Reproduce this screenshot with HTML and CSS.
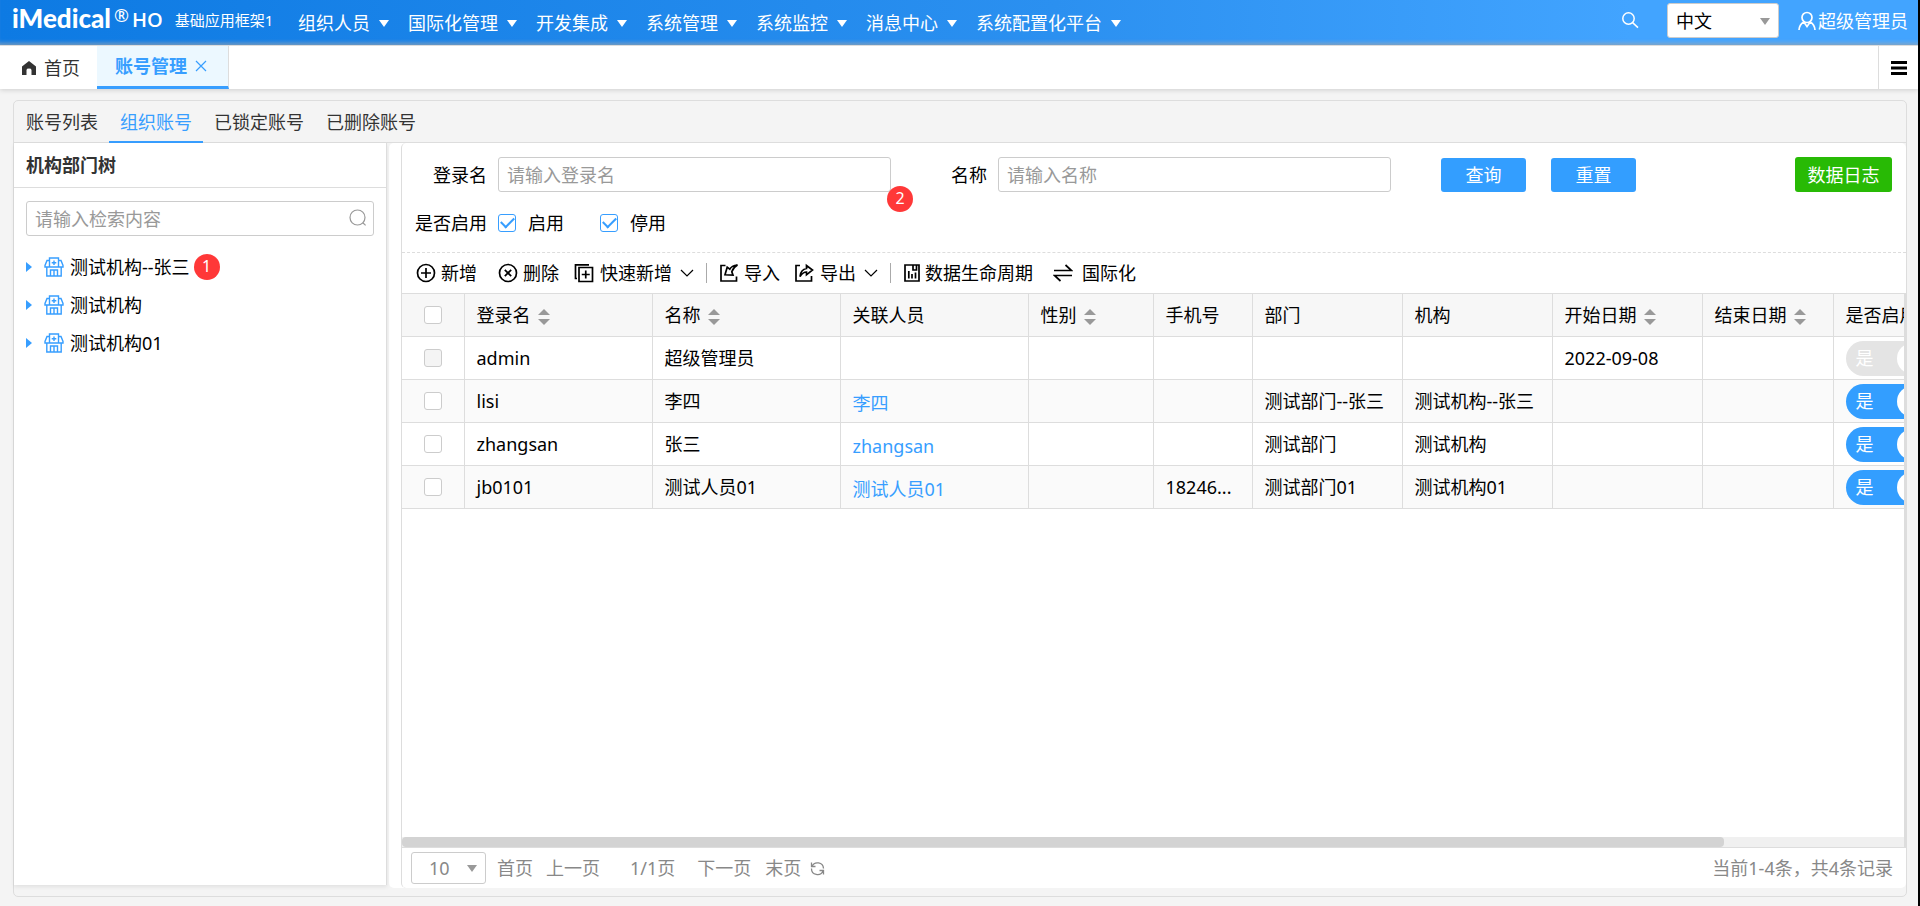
FILE: index.html
```html
<!DOCTYPE html>
<html lang="zh-CN">
<head>
<meta charset="utf-8">
<title>iMedical HO - 账号管理</title>
<link rel="stylesheet" href="styles.css">
</head>
<body>
<div class="app">
  <header class="topbar">
    <div class="brand">
      <span class="brand-name">iMedical</span><span class="brand-reg">®</span><span class="brand-ho">HO</span>
      <span class="brand-sub">基础应用框架1</span>
    </div>
    <nav class="menu">
      <a href="#" class="menu-item">组织人员<i class="caret"></i></a>
      <a href="#" class="menu-item">国际化管理<i class="caret"></i></a>
      <a href="#" class="menu-item">开发集成<i class="caret"></i></a>
      <a href="#" class="menu-item">系统管理<i class="caret"></i></a>
      <a href="#" class="menu-item">系统监控<i class="caret"></i></a>
      <a href="#" class="menu-item">消息中心<i class="caret"></i></a>
      <a href="#" class="menu-item">系统配置化平台<i class="caret"></i></a>
    </nav>
    <div class="top-right">
      <button class="plain search-btn" aria-label="搜索"><svg width="18" height="18" viewBox="0 0 18 18" fill="none" stroke="currentColor" stroke-width="1.5"><circle cx="7.5" cy="7.5" r="5.7"/><path d="M11.6 11.6 17 16.6"/></svg></button>
      <div class="select-wrap lang">
        <select aria-label="语言"><option>中文</option></select><i class="caret grey"></i>
      </div>
      <a href="#" class="user"><svg width="18" height="20" viewBox="0 0 18 20" fill="none" stroke="currentColor" stroke-width="1.7"><circle cx="9" cy="6.5" r="5"/><path d="M1 19c.3-4 2-6.500 4.800-8L9 15.500 12.200 11c2.800 1.500 4.500 4 4.800 8"/></svg>超级管理员</a>
    </div>
  </header>

  <div class="pagetabs">
    <a href="#" class="ptab home"><svg width="14" height="14" viewBox="0 0 14 14" fill="#333"><path d="M7 0 14 5.500V14H9.500V9Q9.500 7.600 7 7.600 4.500 7.600 4.500 9V14H0V5.500z"/></svg>首页</a>
    <div class="ptab active"><a href="#">账号管理</a><button class="plain close" aria-label="关闭"><svg width="12" height="12" viewBox="0 0 12 12" stroke="#379eff" stroke-width="1.200"><path d="M1 1l10 10M11 1 1 11"/></svg></button></div>
    <button class="plain burger" aria-label="菜单"><svg width="16" height="14" viewBox="0 0 16 14" fill="#000"><path d="M0 0h16v3H0zM0 5.500h16v3H0zM0 11h16v3H0z"/></svg></button>
  </div>

  <main class="frame">
    <nav class="subtabs">
      <a href="#" class="subtab">账号列表</a>
      <a href="#" class="subtab active">组织账号</a>
      <a href="#" class="subtab">已锁定账号</a>
      <a href="#" class="subtab">已删除账号</a>
    </nav>
    <div class="content">
      <aside class="side">
        <h2 class="side-title">机构部门树</h2>
        <div class="side-search">
          <input type="text" placeholder="请输入检索内容" aria-label="检索">
          <svg width="18" height="18" viewBox="0 0 18 18" fill="none" stroke="#999" stroke-width="1.200"><circle cx="8.500" cy="8.500" r="7.500"/><path d="M13.800 13.800 16.600 16.400"/></svg>
        </div>
        <ul class="tree">
          <li><i class="arrow"></i><svg class="org" width="20" height="20" viewBox="0 0 20 20"><use href="#org"/></svg>测试机构--张三<span class="badge">1</span></li>
          <li><i class="arrow"></i><svg class="org" width="20" height="20" viewBox="0 0 20 20"><use href="#org"/></svg>测试机构</li>
          <li><i class="arrow"></i><svg class="org" width="20" height="20" viewBox="0 0 20 20"><use href="#org"/></svg>测试机构01</li>
        </ul>
      </aside>

      <section class="panel">
        <form class="filter">
          <div class="filter-row">
            <label class="flabel" for="login">登录名</label>
            <div class="field"><input id="login" class="text" type="text" placeholder="请输入登录名"><span class="badge floating">2</span></div>
            <label class="flabel second" for="name">名称</label>
            <div class="field"><input id="name" class="text" type="text" placeholder="请输入名称"></div>
            <button type="button" class="btn query">查询</button>
            <button type="button" class="btn reset">重置</button>
            <button type="button" class="btn log">数据日志</button>
          </div>
          <div class="filter-row checks">
            <span class="flabel">是否启用</span>
            <label class="check"><input type="checkbox" checked>启用</label>
            <label class="check"><input type="checkbox" checked>停用</label>
          </div>
        </form>

        <div class="toolbar">
          <button class="tool add"><svg width="20" height="20" viewBox="0 0 20 20"><circle cx="10" cy="10" r="8.500"/><path d="M10 5v10M5 10h10"/></svg>新增</button>
          <button class="tool del"><svg width="20" height="20" viewBox="0 0 20 20"><circle cx="10" cy="10" r="8.500"/><path d="M6.800 6.800l6.400 6.400M13.200 6.800l-6.400 6.400"/></svg>删除</button>
          <button class="tool quick"><svg width="20" height="20" viewBox="0 0 20 20"><path d="M5 4.500h13.500v14H5zM11.750 7.500v8M7.750 11.500h8M3 15.500H1.500V1.800H15"/></svg>快速新增<svg class="chev" width="14" height="10" viewBox="0 0 14 10"><path d="M1 2l6 6 6-6"/></svg></button>
          <i class="sep"></i>
          <button class="tool imp"><svg width="20" height="20" viewBox="0 0 20 20"><path d="M6.500 2.500H2V18h15.500v-4.500M18.500 2C14 2.500 12 3.800 10.800 6.200L8.200 4.200 6 11.800 14 12.200 12.800 8.800C13.800 5.800 15.500 3.600 18.500 2z"/></svg>导入</button>
          <button class="tool exp"><svg width="20" height="20" viewBox="0 0 20 20"><path d="M6 2.500H2V18h15.500v-5M6 13.500C6.500 9 9 6 12.500 5.500V2.500L18.500 7l-6 4.800V9C9.800 9 8 10.500 6 13.500z"/></svg>导出<svg class="chev" width="14" height="10" viewBox="0 0 14 10"><path d="M1 2l6 6 6-6"/></svg></button>
          <i class="sep"></i>
          <button class="tool life"><svg width="16" height="20" viewBox="0 0 16 20"><path d="M1 2h14v16H1zM9 2v5h3.500V2M4.800 8v7.500M8 11v4.500M11.500 9.500v6"/></svg>数据生命周期</button>
          <button class="tool intl"><svg width="20" height="20" viewBox="0 0 20 20"><path d="M1 7.500h17.500L12.500 2M19 12.500H1.500L7.500 18"/></svg>国际化</button>
        </div>

        <div class="grid-scroll">
          <table class="grid">
            <colgroup><col class="c-check"><col class="c-name"><col class="c-name"><col class="c-name"><col class="c-sex"><col class="c-phone"><col class="c-org"><col class="c-org"><col class="c-org"><col class="c-end"><col class="c-on"></colgroup>
            <thead>
              <tr>
                <th class="pick"><input type="checkbox" aria-label="全选"></th>
                <th>登录名<i class="sort"></i></th><th>名称<i class="sort"></i></th><th>关联人员</th><th>性别<i class="sort"></i></th><th>手机号</th><th>部门</th><th>机构</th><th>开始日期<i class="sort"></i></th><th>结束日期<i class="sort"></i></th><th>是否启用</th>
              </tr>
            </thead>
            <tbody>
              <tr><td class="pick"><input type="checkbox" disabled aria-label="选择 admin"></td><td>admin</td><td>超级管理员</td><td></td><td></td><td></td><td></td><td></td><td>2022-09-08</td><td></td><td class="onoff"><button class="switch off">是</button></td></tr>
              <tr><td class="pick"><input type="checkbox" aria-label="选择 lisi"></td><td>lisi</td><td>李四</td><td><a href="#">李四</a></td><td></td><td></td><td>测试部门--张三</td><td>测试机构--张三</td><td></td><td></td><td class="onoff"><button class="switch">是</button></td></tr>
              <tr><td class="pick"><input type="checkbox" aria-label="选择 zhangsan"></td><td>zhangsan</td><td>张三</td><td><a href="#">zhangsan</a></td><td></td><td></td><td>测试部门</td><td>测试机构</td><td></td><td></td><td class="onoff"><button class="switch">是</button></td></tr>
              <tr><td class="pick"><input type="checkbox" aria-label="选择 jb0101"></td><td>jb0101</td><td>测试人员01</td><td><a href="#">测试人员01</a></td><td></td><td>18246...</td><td>测试部门01</td><td>测试机构01</td><td></td><td></td><td class="onoff"><button class="switch">是</button></td></tr>
            </tbody>
          </table>
          <div class="hbar"><div class="hthumb"></div></div>
        </div>

        <footer class="pager">
          <div class="select-wrap size"><select aria-label="每页条数"><option>10</option></select><i class="caret grey"></i></div>
          <button class="plain first">首页</button>
          <button class="plain prev">上一页</button>
          <span class="current">1/1页</span>
          <button class="plain next">下一页</button>
          <button class="plain last">末页</button>
          <button class="plain refresh" aria-label="刷新"><svg width="15" height="15" viewBox="0 0 15 15" fill="none" stroke="#888" stroke-width="1.300"><path d="M2 5.500A6 6 0 0 1 13.500 7.500M13 10A6 6 0 0 1 1.500 7.500M1.500 1.500V5.500H5.500M13.500 13.500V9.500H9.500"/></svg></button>
          <span class="total">当前1-4条，共4条记录</span>
        </footer>
      </section>
    </div>
  </main>
</div>

<svg class="defs" width="0" height="0" aria-hidden="true">
  <symbol id="org" viewBox="0 0 20 20">
    <g fill="none" stroke="#379eff" stroke-width="1.400">
      <path d="M5.500 3.500H3L1 8.500V10h18V8.500L17 3.500h-2.500M5.500 10V1h9v9M10 3.500v4.500M7.700 5.700h4.600M2.800 10v9h14.400v-9M6.500 19v-6h7v6M10 13v6"/>
    </g>
  </symbol>
</svg>
</body>
</html>
```
FILE: styles.css
```css
* { box-sizing: border-box; }
html, body { height: 100%; margin: 0; }
body {
  background: #000;
  color: #000;
  font: 18px/24px "Noto Sans", "Noto Sans CJK SC", sans-serif;
}
a { color: inherit; text-decoration: none; }
button, input, select { font: inherit; color: inherit; margin: 0; }
svg { flex: none; }
.defs { display: block; }
.plain { border: 0; padding: 0; background: none; display: flex; align-items: center; }

.app {
  height: 100vh;
  margin-right: 2px;
  background: #f4f4f4;
  display: flex;
  flex-direction: column;
  overflow: hidden;
}

/* top bar */
.topbar {
  flex: none;
  height: 45px;
  display: flex;
  align-items: flex-start;
  color: #fff;
  background: linear-gradient(90deg, #0d7ae3, #2b90f0 55%, #42a4ff 85%);
  box-shadow: inset 0 -5px 4px -3px rgba(170, 180, 190, .7);
}
.brand { display: flex; width: 298px; padding-left: 12px; padding-top: 5px; white-space: nowrap; }
.brand-name { font: 900 26px/26px Lato, sans-serif; }
.brand-reg { font-size: 18px; line-height: 20px; margin-left: 3px; }
.brand-ho { font: 600 20px/29px "Open Sans", sans-serif; margin-left: 3px; }
.brand-sub { font-size: 15px; line-height: 31px; margin-left: 12px; }
.menu { display: flex; gap: 19px; padding-top: 11px; white-space: nowrap; }
.menu-item { display: flex; align-items: center; gap: 9px; }
.caret { width: 0; height: 0; border: 5px solid transparent; border-top: 7px solid #fff; border-bottom: 0; }
.caret.grey { border-top-color: #999; position: absolute; right: 9px; top: 50%; margin-top: -3px; pointer-events: none; }
.top-right { margin-left: auto; display: flex; align-items: flex-start; padding-right: 10px; padding-top: 3px; white-space: nowrap; }
.search-btn { height: 34px; margin-right: 28px; }
.select-wrap { position: relative; }
.select-wrap select {
  appearance: none;
  width: 100%;
  height: 100%;
  border: 1px solid #ccc;
  border-radius: 3px;
  background: #fff;
  padding: 0 8px;
}
.lang { width: 112px; height: 35px; color: #000; margin-right: 19px; }
.user { display: flex; align-items: center; gap: 2px; height: 35px; }

/* page tabs */
.pagetabs {
  flex: none;
  height: 44px;
  display: flex;
  background: #fff;
  border-top: 1px solid #ddd;
  box-shadow: 0 1px 5px rgba(0, 0, 0, .16);
  color: #333;
}
.ptab { display: flex; align-items: center; }
.home { width: 97px; padding-left: 22px; gap: 8px; }
.active.ptab {
  width: 132px;
  padding-left: 18px;
  gap: 8px;
  background: #ecf8ff;
  color: #379eff;
  font-weight: 700;
  border-bottom: 3px solid #379eff;
  border-right: 1px solid #ddd;
}
.burger { margin-left: auto; width: 40px; padding-left: 12px; border-left: 1px solid #ddd; }

/* framed content */
.frame {
  flex: 1;
  min-height: 0;
  margin: 11px 11px 9px 13px;
  border: 1px solid #ddd;
  border-radius: 5px;
  display: flex;
  flex-direction: column;
}
.subtabs { flex: none; height: 42px; display: flex; border-bottom: 1px solid #ddd; color: #333; padding-left: 1px; }
.subtab { height: 43px; padding: 9px 11px 0; }
.subtab.active { color: #379eff; border-bottom: 3px solid #379eff; }
.content { flex: 1; min-height: 0; display: flex; padding-bottom: 8px; }

.side {
  position: relative;
  z-index: 1;
  flex: none;
  width: 373px;
  margin-bottom: 3px;
  background: #fff;
  border-right: 1px solid #ddd;
  box-shadow: 0 2px 4px rgba(0, 0, 0, .08);
}
.side-title { margin: 0; height: 45px; padding: 10px 12px; font-size: 18px; line-height: 24px; color: #333; border-bottom: 1px solid #ddd; }
.side-search { position: relative; margin: 13px 12px 12px; height: 35px; }
.side-search input { width: 100%; height: 100%; padding: 0 8px; border: 1px solid #ccc; border-radius: 3px; }
.side-search svg { position: absolute; right: 7px; top: 8px; }
input::placeholder { color: #999; opacity: 1; }
.tree { list-style: none; margin: 0; padding: 0 12px; }
.tree li { display: flex; align-items: center; height: 38px; }
.arrow { border: 5px solid transparent; border-left: 6px solid #379eff; border-right: 0; }
.org { margin: 0 6px 0 12px; }
.badge {
  width: 26px;
  height: 26px;
  border-radius: 50%;
  background: #ff3838;
  color: #fff;
  font-size: 16px;
  line-height: 24px;
  text-align: center;
}
.tree .badge { margin-left: 4px; }
.badge.floating { position: absolute; right: -22px; bottom: -20px; }

.panel {
  flex: 1;
  min-width: 0;
  display: flex;
  flex-direction: column;
  background: #fff;
  border-left: 1px solid #ddd;
  border-radius: 5px;
  margin-left: 14px;
  box-shadow: -12px 0 0 #fff;
}

/* filter form */
.filter { flex: none; height: 110px; padding: 14px 14px 0 10px; border-bottom: 1px dashed #ddd; }
.filter-row { display: flex; align-items: center; height: 35px; }
.flabel { width: 75px; text-align: right; white-space: nowrap; }
.flabel.second { width: 96px; }
.field { position: relative; flex: 0 1 393px; margin-left: 11px; height: 35px; }
.text { width: 100%; height: 100%; padding: 0 8px; border: 1px solid #ccc; border-radius: 3px; }
.btn { height: 34px; border: 0; border-radius: 3px; color: #fff; background: #339eff; width: 85px; flex: none; padding: 0; }
.query { margin-left: 50px; }
.reset { margin-left: 25px; }
.log { margin-left: auto; width: 97px; height: 35px; background: #28ba05; }
.checks { margin-top: 13px; }
.check { display: flex; align-items: center; gap: 12px; width: 91px; margin-left: 11px; }
input[type="checkbox"] {
  appearance: none;
  width: 18px;
  height: 18px;
  border: 1px solid #ccc;
  border-radius: 3px;
  background: #fff;
  display: grid;
  place-items: center;
}
input[type="checkbox"]:disabled { background: #f4f4f4; }
input[type="checkbox"]:checked { border-color: #379eff; }
input[type="checkbox"]:checked::before {
  content: "";
  width: 11px;
  height: 6px;
  margin-bottom: 3px;
  border: solid #379eff;
  border-width: 0 0 2px 2px;
  transform: rotate(-45deg);
}

/* toolbar */
.toolbar { flex: none; height: 40px; display: flex; align-items: center; padding-left: 14px; }
.tool { border: 0; background: none; padding: 0; display: flex; align-items: center; white-space: nowrap; gap: 5px; }
.tool svg { fill: none; stroke: #000; stroke-width: 1.7; }
.tool .chev { stroke-width: 1.2; margin-left: 2px; }
.del { margin-left: 21px; }
.quick { margin-left: 15px; gap: 6px; }
.imp { margin-left: 12px; }
.exp { margin-left: 14px; gap: 6px; }
.life { margin-left: 13px; }
.intl { margin-left: 20px; gap: 9px; }
.sep { width: 1px; height: 20px; background: #aaa; margin-left: 12px; }

/* table */
.grid-scroll { flex: 1; min-height: 0; overflow: hidden; display: flex; flex-direction: column; border-right: 2px solid #ddd; }
.grid { table-layout: fixed; width: 1531px; border-collapse: collapse; flex: none; }
.c-check { width: 62px; }
.c-name { width: 188px; }
.c-sex { width: 125px; }
.c-phone { width: 99px; }
.c-org { width: 150px; }
.c-end { width: 131px; }
.c-on { width: 100px; }
.grid th, .grid td {
  height: 43px;
  padding: 0 0 0 12px;
  border: 1px solid #ddd;
  border-left: 0;
  font-weight: 400;
  text-align: left;
  white-space: nowrap;
  overflow: hidden;
}
.grid th { background: #f7f7f7; }
.grid tbody tr:nth-child(even) { background: #fafafa; }
.grid .pick { padding: 0 0 0 22px; }
.grid a { display: block; padding-top: 3px; color: #379eff; }
.sort { display: inline-grid; gap: 4px; margin-left: 7px; vertical-align: middle; }
.sort::before, .sort::after { content: ""; border: 6px solid transparent; }
.sort::before { border-top: 0; border-bottom-color: #999; }
.sort::after { border-bottom: 0; border-top-color: #999; }
.switch {
  display: flex;
  align-items: center;
  justify-content: space-between;
  width: 84px;
  height: 35px;
  padding: 0 2px 0 10px;
  border: 0;
  border-radius: 18px;
  background: #339eff;
  color: #fff;
}
.switch::after { content: ""; width: 31px; height: 31px; border-radius: 50%; background: #fff; }
.switch.off { background: #e4e4e4; }
.hbar { flex: none; margin-top: auto; height: 10px; background: #f0f0f0; }
.hthumb { width: 88%; height: 100%; background: #d3d3d3; border-radius: 4px; }

/* pager */
.pager { flex: none; height: 41px; display: flex; align-items: center; padding: 0 13px 0 9px; border-top: 1px solid #ddd; color: #888; white-space: nowrap; }
.size { width: 75px; height: 32px; }
.size select { padding-left: 17px; }
.first { margin-left: 11px; }
.prev { margin-left: 13px; }
.current { margin-left: 30px; }
.next { margin-left: 22px; }
.last { margin-left: 14px; }
.refresh { margin-left: 9px; }
.total { margin-left: auto; }
```
